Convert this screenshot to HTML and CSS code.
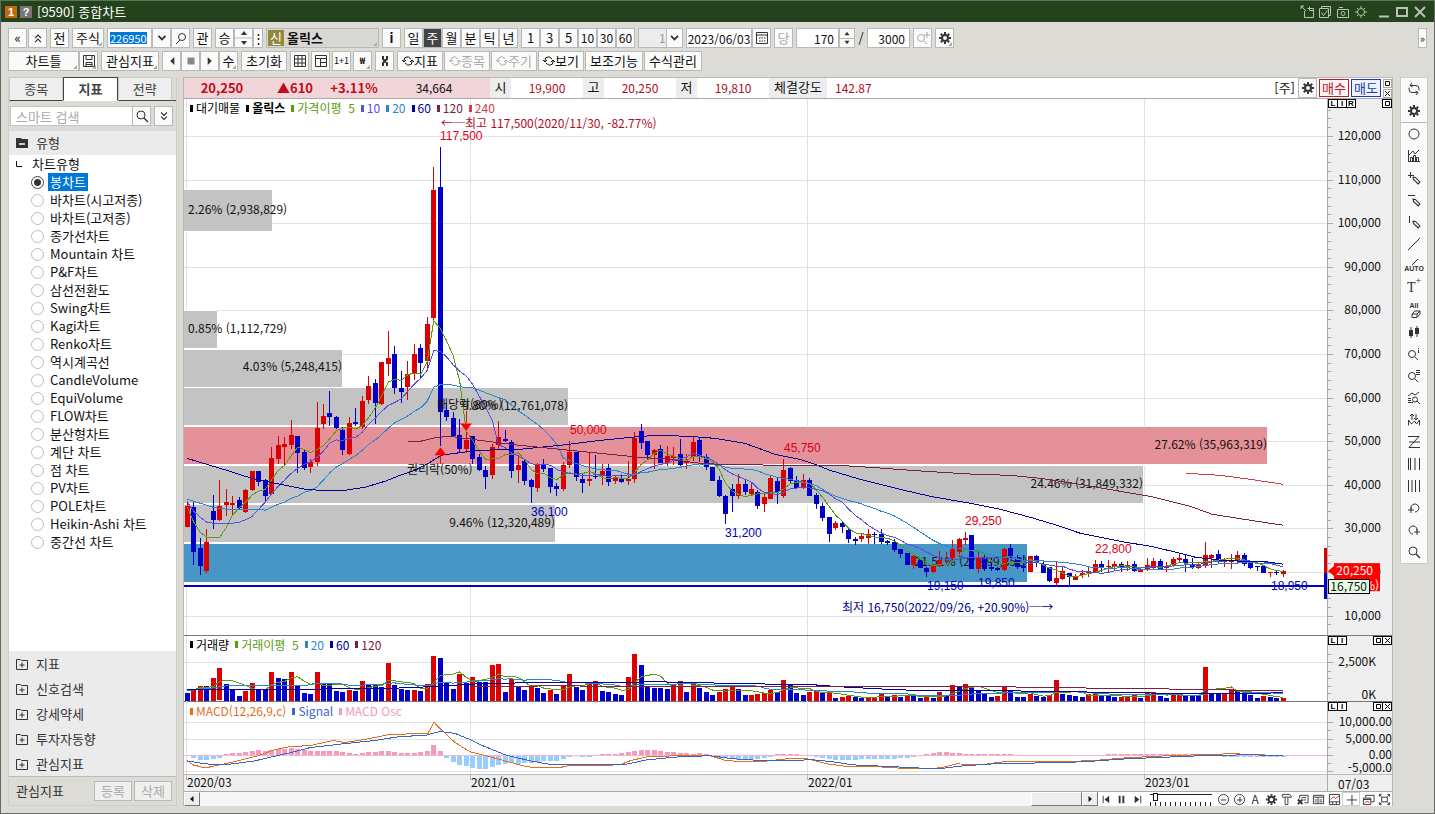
FILE: index.html
```html
<!DOCTYPE html>
<html lang="ko">
<head>
<meta charset="utf-8">
<title>[9590] 종합차트</title>
<link rel="stylesheet" href="styles.css">
</head>
<body>
<svg class="defs" aria-hidden="true">
  <symbol id="gear" viewBox="0 0 14 14"><circle cx="7" cy="7" r="3" fill="none" stroke="currentColor" stroke-width="2"/><path d="M7 1v2M7 11v2M1 7h2M11 7h2M2.8 2.8l1.4 1.4M9.8 9.8l1.4 1.4M11.2 2.8L9.8 4.2M4.2 9.8l-1.4 1.4" stroke="currentColor" stroke-width="2"/></symbol>
  <symbol id="lens" viewBox="0 0 14 14"><circle cx="6" cy="6" r="4" fill="none" stroke="currentColor"/><path d="M9 9l4 4" stroke="currentColor" stroke-width="1.4"/></symbol>
  <symbol id="chev" viewBox="0 0 10 10"><path d="M2.500 3.500L5 6l2.500-2.500" fill="none" stroke="currentColor" stroke-width="1.3"/></symbol>
  <symbol id="cycle" viewBox="0 0 12 12"><path d="M2 6.500V5a3 3 0 0 1 3-3h1.500L9 4M10 5.500V7a3 3 0 0 1-3 3H5.500L3 8M0 5l2 2 2-2M8 7l2-2 2 2" fill="none" stroke="currentColor"/></symbol>
  <symbol id="plusbox" viewBox="0 0 12 12"><path d="M.5 1.500h4l1 1h6v9H.5zM6 4.500v5M3.500 7h5" fill="none" stroke="currentColor"/></symbol>
  <symbol id="pen" viewBox="0 0 8 8"><path d="M1 1l2 .3 4 4L5.500 7 1.300 3z" fill="none" stroke="currentColor"/></symbol>
  <symbol id="sq" viewBox="0 0 7 7"><path d="M1.500 1.500h4v4h-4z" fill="none" stroke="currentColor"/></symbol>
  <symbol id="ex" viewBox="0 0 7 7"><path d="M1 1l5 5M6 1L1 6" fill="none" stroke="currentColor"/></symbol>
</svg>
<div class="window">
  <header class="titlebar">
    <span class="badge badge-num">1</span><span class="badge badge-help">?</span>
    <h1>[9590] 종합차트</h1>
    <div class="win-tools">
      <button aria-label="분리"><svg viewBox="0 0 14 14"><path d="M4.500 6v6.500h9v-9h-6M9.500 1.500v4h4M1 1l5 5M1 4V1h3" class="s"/></svg></button>
      <button aria-label="복사"><svg viewBox="0 0 14 14"><path d="M3.500 3V1.500h9v9H11M1.500 3.500h9v9h-9zM3.500 7.500l2 3 4-5" class="s"/></svg></button>
      <button aria-label="캡처"><svg viewBox="0 0 14 14"><path d="M1.500 4.500h11v8h-11zM3 2.500h4" class="s"/><circle cx="7" cy="8.500" r="2" class="s"/></svg></button>
      <button aria-label="설정"><svg viewBox="0 0 14 14"><circle cx="7" cy="7" r="3.500" class="s"/><path d="M7 1v2M7 11v2M1 7h2M11 7h2M3 3l1 1M10 10l1 1M11 3l-1 1M4 10l-1 1" class="s"/></svg></button>
    </div>
    <div class="win-ctl">
      <button aria-label="최소화"><svg viewBox="0 0 12 12"><path d="M1 10.500h10" class="s s2"/></svg></button>
      <button aria-label="최대화"><svg viewBox="0 0 12 12"><path d="M1 2h10v8H1z" class="s s2"/></svg></button>
      <button aria-label="닫기"><svg viewBox="0 0 12 12"><path d="M1 1l10 10M11 1L1 11" class="s s2"/></svg></button>
    </div>
  </header>

  <div class="toolbar">
    <div class="group tight"><button class="b w19">«</button><button class="b w19" aria-label="위로"><svg viewBox="0 0 12 12"><path d="M3.500 6L6 3.500 8.500 6M3.500 9.500L6 7l2.500 2.500" class="s"/></svg></button></div>
    <button class="b w19">전</button>
    <button class="b w32 corner">주식</button>
    <div class="group joined"><input class="code" aria-label="종목코드" value="226950"><button class="b w19" aria-label="목록"><svg><use href="#chev"/></svg></button><button class="b w19" aria-label="찾기"><svg viewBox="0 0 14 14"><circle cx="8" cy="6" r="3.500" class="s"/><path d="M6 9l-4 4" class="s"/></svg></button></div>
    <button class="b w19">관</button>
    <div class="group joined"><button class="b w19">승</button><button class="b w19" aria-label="이동"><svg viewBox="0 0 18 18" class="updown"><path d="M9 2l3 4H6zM9 16l3-4H6z"/><path d="M0 9h18" stroke="#bbb"/></svg></button><button class="b w10">⋮</button></div>
    <div class="stock corner"><span class="new">신</span><b>올릭스</b></div>
    <button class="b w19"><b>i</b></button>
    <div class="group joined"><button class="b w19">일</button><button class="b w19 on">주</button><button class="b w19">월</button><button class="b w19">분</button><button class="b w19">틱</button><button class="b w19">년</button></div>
    <div class="group joined"><button class="b w19">1</button><button class="b w19">3</button><button class="b w19">5</button><button class="b w19 small">10</button><button class="b w19 small">30</button><button class="b w19 small">60</button></div>
    <div class="pick"><select aria-label="단위" disabled><option>1</option></select><svg><use href="#chev"/></svg></div>
    <div class="group joined"><input class="date" aria-label="일자" value="2023/06/03"><button class="b w19" aria-label="달력"><svg viewBox="0 0 14 14"><path d="M1.500 1.500h11v11h-11zM1.500 4h11" class="s"/><path d="M4 7h7M4 10h7" class="s" stroke-dasharray="1.500 1"/></svg></button></div>
    <button class="b w19" disabled>당</button>
    <div class="group joined"><input class="num" aria-label="표시 개수" value="170"><span class="spin"><button aria-label="증가"><svg viewBox="0 0 8 6"><path d="M1 5l3-4 3 4z"/></svg></button><button aria-label="감소"><svg viewBox="0 0 8 6"><path d="M1 1l3 4 3-4z"/></svg></button></span></div>
    <span class="slash">/</span>
    <input class="num" aria-label="전체 개수" value="3000">
    <button class="b w19" aria-label="확대" disabled><svg viewBox="0 0 14 14"><circle cx="5" cy="7" r="3.500" class="s"/><path d="M8 10l3 3M11 1v6M8 4h6" class="s"/></svg></button>
    <button class="b w19 corner" aria-label="설정"><svg><use href="#gear"/></svg></button>
    <button class="b more" aria-label="더보기">»</button>
  </div>
  <div class="toolbar second">
    <div class="group joined"><button class="b w71 corner">차트틀</button><button class="b w19 corner" aria-label="저장"><svg viewBox="0 0 14 14"><path d="M1.500 1.500h11v11h-11zM4 1.500v4h6v-4M4 12V8.500h6V12M4 10.500h6" class="s"/></svg></button></div>
    <button class="b w58 corner">관심지표</button>
    <div class="group joined"><button class="b w19" aria-label="이전"><svg viewBox="0 0 12 12"><path d="M8 2.500v7L4.500 6z"/></svg></button><button class="b w19" aria-label="정지"><svg viewBox="0 0 12 12"><path d="M3 3h6v6H3z" fill="#888"/></svg></button><button class="b w19" aria-label="다음"><svg viewBox="0 0 12 12"><path d="M4 2.500v7L7.500 6z"/></svg></button><button class="b w19 corner">수</button></div>
    <button class="b w46">초기화</button>
    <div class="group icons">
      <button class="b w19" aria-label="표"><svg viewBox="0 0 14 14"><path d="M1.500 1.500h11v11h-11zM1.500 5h11M1.500 9h11M5 1.500v11M9 1.500v11" class="s"/></svg></button>
      <button class="b w19" aria-label="분할"><svg viewBox="0 0 14 14"><path d="M1.500 1.500h11v11h-11zM1.500 4.500h11M6.500 4.500v8M6.500 8.500h6" class="s"/></svg></button>
      <button class="b w19 tiny">1+1</button>
      <button class="b w19 corner tiny"><b>₩</b></button>
    </div>
    <button class="b w19" aria-label="도구"><svg viewBox="0 0 14 14"><path d="M5 2v3l4 4v3M9 2v3L5 9v3" class="s s2"/></svg></button>
    <div class="group tight">
      <button class="b w46 cyc"><svg><use href="#cycle"/></svg>지표</button>
      <button class="b w46 cyc" disabled><svg><use href="#cycle"/></svg>종목</button>
      <button class="b w46 cyc" disabled><svg><use href="#cycle"/></svg>주기</button>
      <button class="b w46 cyc"><svg><use href="#cycle"/></svg>보기</button>
      <button class="b w58">보조기능</button>
      <button class="b w58">수식관리</button>
    </div>
  </div>

  <main class="main">
    <aside class="side">
      <nav class="tabs"><button>종목</button><button class="sel">지표</button><button>전략</button></nav>
      <div class="search"><input aria-label="검색" placeholder="스마트 검색"><button class="b w19" aria-label="검색"><svg><use href="#lens"/></svg></button><button class="b w19 gap" aria-label="펼치기"><svg viewBox="0 0 12 12"><path d="M3.500 3L6 5.500 8.500 3M3.500 6.500L6 9l2.500-2.500" class="s"/></svg></button></div>
      <h2 class="sec"><svg viewBox="0 0 12 12"><path d="M0 1h5l1 1h6v9H0z" fill="#333"/><path d="M3 7h6" stroke="#fff" stroke-width="1.500"/></svg>유형</h2>
      <div class="tree">
        <div class="branch"><svg viewBox="0 0 6 6"><path d="M.5 0v5.500H6" class="s"/></svg>차트유형</div>
        <label><input type="radio" name="t" checked><span>봉차트</span></label>
        <label><input type="radio" name="t"><span>바차트(시고저종)</span></label>
        <label><input type="radio" name="t"><span>바차트(고저종)</span></label>
        <label><input type="radio" name="t"><span>종가선차트</span></label>
        <label><input type="radio" name="t"><span>Mountain 차트</span></label>
        <label><input type="radio" name="t"><span>P&amp;F차트</span></label>
        <label><input type="radio" name="t"><span>삼선전환도</span></label>
        <label><input type="radio" name="t"><span>Swing차트</span></label>
        <label><input type="radio" name="t"><span>Kagi차트</span></label>
        <label><input type="radio" name="t"><span>Renko차트</span></label>
        <label><input type="radio" name="t"><span>역시계곡선</span></label>
        <label><input type="radio" name="t"><span>CandleVolume</span></label>
        <label><input type="radio" name="t"><span>EquiVolume</span></label>
        <label><input type="radio" name="t"><span>FLOW차트</span></label>
        <label><input type="radio" name="t"><span>분산형차트</span></label>
        <label><input type="radio" name="t"><span>계단 차트</span></label>
        <label><input type="radio" name="t"><span>점 차트</span></label>
        <label><input type="radio" name="t"><span>PV차트</span></label>
        <label><input type="radio" name="t"><span>POLE차트</span></label>
        <label><input type="radio" name="t"><span>Heikin-Ashi 차트</span></label>
        <label><input type="radio" name="t"><span>중간선 차트</span></label>
      </div>
      <div class="folds">
        <button><svg><use href="#plusbox"/></svg>지표</button>
        <button><svg><use href="#plusbox"/></svg>신호검색</button>
        <button><svg><use href="#plusbox"/></svg>강세약세</button>
        <button><svg><use href="#plusbox"/></svg>투자자동향</button>
        <button><svg><use href="#plusbox"/></svg>관심지표</button>
      </div>
      <div class="foot"><span>관심지표</span><button class="b w38" disabled>등록</button><button class="b w38" disabled>삭제</button></div>
    </aside>

    <section class="chart">
      <div class="quote">
        <div class="pink"><b class="q76">20,250</b><b class="q70">▲610</b><b class="q48">+3.11%</b><span class="q112">34,664</span></div>
        <span class="k">시</span><span class="v">19,900</span>
        <span class="k">고</span><span class="v">20,250</span>
        <span class="k">저</span><span class="v">19,810</span>
        <span class="k wide">체결강도</span><span class="v left">142.87</span>
        <span class="period">[주]</span>
        <button class="b w19" aria-label="설정"><svg><use href="#gear"/></svg></button>
        <button class="trade buy">매수</button><button class="trade sell">매도</button>
        <span class="mini"><button aria-label="창"><svg><use href="#sq"/></svg></button><button aria-label="닫기"><svg><use href="#ex"/></svg></button></span>
      </div>
      <div class="pane price">
        <div class="plot"><svg id="price"></svg>
          <ul class="legend"><li class="c-k">대기매물</li><li class="c-k"><b>올릭스</b></li><li class="c-5">가격이평&nbsp; 5</li><li class="c-10">10</li><li class="c-20">20</li><li class="c-60">60</li><li class="c-120">120</li><li class="c-240">240</li></ul>
        </div>
        <div class="axis"><svg id="priceAxis"></svg>
          <div class="tags"><button>L</button><button>I</button><button>R</button><button class="end" aria-label="창"><svg><use href="#sq"/></svg></button></div>
        </div>
      </div>
      <div class="pane volume">
        <div class="plot"><svg id="volume"></svg>
          <ul class="legend"><li class="c-k">거래량</li><li class="c-5">거래이평&nbsp; 5</li><li class="c-20">20</li><li class="c-60">60</li><li class="c-120">120</li></ul>
        </div>
        <div class="axis"><svg id="volumeAxis"></svg>
          <div class="tags"><button>L</button><button>I</button><button class="end" aria-label="창"><svg><use href="#sq"/></svg></button><button aria-label="닫기"><svg><use href="#ex"/></svg></button></div>
        </div>
      </div>
      <div class="pane macd">
        <div class="plot"><svg id="macd"></svg>
          <ul class="legend"><li class="c-m">MACD(12,26,9,c)</li><li class="c-s">Signal</li><li class="c-o">MACD Osc</li></ul>
        </div>
        <div class="axis"><svg id="macdAxis"></svg>
          <div class="tags"><button>L</button><button>I</button><button class="end" aria-label="창"><svg><use href="#sq"/></svg></button><button aria-label="닫기"><svg><use href="#ex"/></svg></button></div>
        </div>
      </div>
      <div class="pane dates"><div class="plot"><svg id="dates"></svg></div><div class="axis"><span>07/03</span></div></div>
      <div class="bottom">
        <button class="sb" aria-label="왼쪽"><svg viewBox="0 0 8 8"><path d="M5.500 1v6L2 4z"/></svg></button>
        <div class="track"><div class="thumb"></div></div>
        <button class="sb" aria-label="오른쪽"><svg viewBox="0 0 8 8"><path d="M2.500 1v6L6 4z"/></svg></button>
        <div class="ctl">
          <button aria-label="처음"><svg viewBox="0 0 14 14"><path d="M4.500 3v8" class="s"/><path d="M11 3v8L6 7z"/></svg></button>
          <button aria-label="일시정지"><svg viewBox="0 0 14 14"><path d="M5 3v8M9 3v8" class="s s2"/></svg></button>
          <button aria-label="끝"><svg viewBox="0 0 14 14"><path d="M10.500 3v8" class="s"/><path d="M4 3v8l5-4z"/></svg></button>
          <input type="range" aria-label="배율" min="0" max="100" value="6">
          <button aria-label="축소"><svg viewBox="0 0 14 14"><circle cx="7" cy="7" r="5.500" class="s"/><path d="M4 7.500h6" class="s"/></svg></button>
          <button aria-label="확대"><svg viewBox="0 0 14 14"><circle cx="7" cy="7" r="5.500" class="s"/><path d="M4 7.500h6M7.500 4v6" class="s"/></svg></button>
          <button>A</button>
          <button aria-label="설정"><svg><use href="#gear"/></svg></button>
          <button aria-label="도구"><svg viewBox="0 0 14 14"><path d="M2.500 4V1.500h8l2 3M2.500 4.500h10M5.500 5v7.500h3V5" class="s"/></svg></button>
          <button aria-label="삭제"><svg viewBox="0 0 14 14"><path d="M4 6V2.500h9v8H9M6 5h5M8 7.500h3" class="s"/><path d="M2 7l5 5M7 7l-5 5" class="s s2"/></svg></button>
          <button aria-label="표"><svg viewBox="0 0 14 14"><path d="M1.500 2.500h11v9h-11zM2 4.500h10M6.500 5v6M3 7.500h2M3 9.500h2M8 7.500h3M8 9.500h3" class="s"/></svg></button>
          <button aria-label="차트"><svg viewBox="0 0 14 14"><path d="M1.500 1.500h11v11h-11zM1.500 9.500h11M5 9.500v3M9 9.500v3" class="s"/><path d="M3 7l3-3 2 2 4-3" fill="none" stroke="#c22"/></svg></button>
          <button class="pressed" aria-label="십자선"><svg viewBox="0 0 14 14"><path d="M7.500 2v11M2 7.500h11" class="s"/></svg></button>
          <button aria-label="창 복제"><svg viewBox="0 0 14 14"><path d="M4 5V2.500h9v7h-3M1.500 5.500h8v7h-8zM1.500 7h8" class="s"/><path d="M3 11l2-2 3 1" fill="none" stroke="#c22"/></svg></button>
          <button aria-label="전체화면"><svg viewBox="0 0 14 14"><path d="M4 4.500h6v5H4zM1.500 4V1.500H4M10 1.500h2.500V4M12.500 10v2.500H10M4 12.500H1.500V10M2 2l2 2M12 2l-2 2M2 12l2-2M12 12l-2-2" class="s"/></svg></button>
        </div>
      </div>
    </section>

    <nav class="rail">
      <button aria-label="새로고침"><svg viewBox="0 0 14 14"><path d="M5 1L3 3.500 5.500 5M3 3.500h6a3 3 0 0 1 3 3v2M9 13l2-2.500L8.500 9M11 10.500H5a3 3 0 0 1-3-3v-2" class="s"/></svg></button>
      <button class="div" aria-label="설정"><svg><use href="#gear"/></svg></button>
      <button aria-label="원"><svg viewBox="0 0 14 14"><circle cx="7" cy="7" r="5" class="s"/></svg></button>
      <button aria-label="지표"><svg viewBox="0 0 14 14"><path d="M1.500 1v11.500H13M3.500 12V8.500h2V12M6.500 12V6.500h2V12M9.500 12V8.500h2V12M2 6l4-4 2 3 4-4" class="s"/></svg></button>
      <button aria-label="십자 그리기"><svg viewBox="0 0 14 14"><path d="M1 4.500h6M3.500 1v6" class="s"/><use href="#pen" x="5" y="5" width="9" height="9"/></svg></button>
      <button aria-label="수평선"><svg viewBox="0 0 14 14"><path d="M1 2.500h7" class="s"/><use href="#pen" x="5" y="5" width="9" height="9"/></svg></button>
      <button aria-label="수직선"><svg viewBox="0 0 14 14"><path d="M2.500 1v7" class="s"/><use href="#pen" x="5" y="5" width="9" height="9"/></svg></button>
      <button aria-label="추세선"><svg viewBox="0 0 14 14"><path d="M1 13L13 1" class="s"/></svg></button>
      <button class="auto"><svg viewBox="0 0 14 6"><path d="M5 6l6-6" class="s"/></svg>AUTO</button>
      <button class="txt">T<sup>+</sup></button>
      <button class="all">All<svg viewBox="0 0 14 8"><path d="M5 7.500V4l3-3h5v3l-3 3.500zM5 4h5v3M10 4l3-3" class="s"/></svg></button>
      <button aria-label="봉"><svg viewBox="0 0 14 14"><path d="M4 2v11M10 1v11" class="s"/><path d="M2 5h4v6H2zM8 3h4v6H8z"/></svg></button>
      <button aria-label="정보"><svg viewBox="0 0 14 14"><circle cx="5" cy="7" r="3.500" class="s"/><path d="M8 10l3 3M11.500 1v1M11.500 3v3" class="s"/></svg></button>
      <button aria-label="목록 검색"><svg viewBox="0 0 14 14"><circle cx="5" cy="7" r="3.500" class="s"/><path d="M8 10l3 3M9 1.500h4M9 3.500h4M9 5.500h4" class="s"/></svg></button>
      <button aria-label="차트 검색"><svg viewBox="0 0 14 14"><circle cx="8" cy="8.500" r="2.500" class="s"/><path d="M10 10l3 3M1 5l4-3 3 2 4-3M1 7.500h3M1 9.500h3M1 11.500h5" class="s"/></svg></button>
      <button aria-label="신호"><svg viewBox="0 0 14 14"><path d="M1.500 12.500V7l3 4 3-3 2 3 3-4v5.500M5 7V1M3 3l2-2 2 2M9 1v6M7 5l2 2 2-2" class="s"/></svg></button>
      <button aria-label="지그재그"><svg viewBox="0 0 14 14"><path d="M1 1.500h11L2 12.500h11M2 7h11" class="s"/></svg></button>
      <button aria-label="구간"><svg viewBox="0 0 14 14"><path d="M1.500 1v12M3.500 1v12M8 1v12M12.500 1v12" class="s"/></svg></button>
      <button aria-label="등간격"><svg viewBox="0 0 14 14"><path d="M1.500 1v12M5 1v12M8.500 1v12M12.500 1v12" class="s"/></svg></button>
      <button aria-label="실행취소"><svg viewBox="0 0 14 14"><path d="M4 8a4 4 0 1 1 4 3M1 9h6M4 6v6" class="s"/></svg></button>
      <button aria-label="다시실행"><svg viewBox="0 0 14 14"><path d="M6 11a4 4 0 1 1 4-3M7 9h6M10 6v6" class="s"/></svg></button>
      <button aria-label="찾기"><svg><use href="#lens"/></svg></button>
    </nav>
  </main>
</div>
<script src="chart.js"></script>
</body>
</html>
```

FILE: styles.css
```css
* { box-sizing: border-box; }
body { margin: 0; font: 13px/18px "Noto Sans CJK KR", "Liberation Sans", sans-serif; color: #111; background: #dcdbd6; }
button, input, select { font: inherit; color: inherit; margin: 0; padding: 0; border: 0; border-radius: 0; background: none; }
button { display: flex; align-items: center; justify-content: center; white-space: nowrap; }
svg { display: block; width: 14px; height: 14px; flex: none; fill: currentColor; }
.defs { position: absolute; width: 0; height: 0; }
.s { fill: none; stroke: currentColor; stroke-width: 1; }
.s2 { stroke-width: 2; }
.window { height: 100vh; min-height: 640px; display: flex; flex-direction: column; border: 1px solid #666963; border-top-color: #5c7554; }

.titlebar { display: flex; align-items: center; flex: none; height: 21px; padding: 0 8px 0 4px; background: #24431c; color: #fff; }
.titlebar h1 { margin: 0 0 0 5px; font-size: 13px; font-weight: 400; line-height: 19px; flex: 1; }
.badge { width: 12px; height: 12px; margin-right: 3px; font: bold 11px/12px "Liberation Sans", sans-serif; text-align: center; }
.badge-num { background: #c06a08; }
.badge-help { background: #77757a; margin-right: 0; }
.win-tools, .win-ctl { display: flex; color: #b9c2b4; }
.win-tools { gap: 4px; margin-right: 10px; }
.win-ctl { gap: 6px; }
.win-ctl svg { width: 12px; height: 12px; }

.toolbar { display: flex; align-items: center; flex: none; gap: 3px; height: 20px; margin: 6px 7px 0; }
.toolbar.second { margin-top: 3px; }
.group { display: flex; gap: 1px; }
.group.icons { gap: 2px; }
.group.joined { gap: 0; }
.joined > * + * { border-left-width: 0; }
.b { position: relative; flex: none; height: 20px; background: #fafafa; border: 1px solid #b9b9b7; line-height: 16px; }
.b:disabled { color: #aaa; }
.b svg { width: 14px; height: 14px; color: #333; }
.b:disabled svg { color: #aaa; }
.w10 { width: 10px; } .w19 { width: 19px; } .w32 { width: 32px; } .w38 { width: 38px; } .w46 { width: 46px; } .w58 { width: 58px; } .w71 { width: 71px; }
.b.on { background: #444; color: #fff; }
.b.small { font-size: 12px; }
.b.tiny { font-size: 9px; }
.b .updown { width: 18px; height: 18px; }
.b.cyc svg { width: 12px; height: 12px; color: inherit; }
.corner::after { content: ""; position: absolute; right: 1px; bottom: 1px; border: 2px solid transparent; border-right-color: #aaa; border-bottom-color: #aaa; }
.toolbar input { height: 20px; background: #fff; border: 1px solid #b9b9b7; font-size: 12px; }
.toolbar .code { width: 45px; padding-left: 2px; color: #fff; font-size: 11px; background: linear-gradient(#0078d7, #0078d7) 2px 3px / 37px 12px no-repeat #fff; }
.date { width: 66px; text-align: center; }
.num { width: 43px; padding-right: 4px; text-align: right; }
.stock { position: relative; display: flex; align-items: center; gap: 3px; width: 113px; height: 20px; padding-left: 1px; border: 1px solid #b9b9b7; background: #d9d8d4; line-height: 16px; }
.new { width: 16px; height: 16px; background: #94893a; color: #fff; text-align: center; line-height: 15px; }
.pick { display: flex; align-items: center; width: 45px; height: 20px; border: 1px solid #b9b9b7; background: #fafafa; }
.pick select { appearance: none; width: 28px; height: 18px; padding-left: 20px; border-right: 1px solid #b9b9b7; background: #ececec; color: #999; font-size: 12px; opacity: 1; }
.pick svg { width: 15px; color: #333; }
.spin { display: flex; flex-direction: column; width: 16px; border: 1px solid #b9b9b7; background: #fafafa; }
.spin button { flex: 1; }
.spin button + button { border-top: 1px solid #b9b9b7; }
.spin svg { width: 8px; height: 5px; fill: #333; }
.slash { width: 6px; text-align: center; }
.b.more { width: 9px; margin-left: auto; font-size: 11px; }

.main { display: flex; flex: 1; min-height: 0; margin: 6px 6px 7px 7px; }
.side { display: flex; flex-direction: column; flex: none; width: 169px; margin-right: 6px; background: #fff; border: 1px solid #cfcfcc; border-top: 0; }
.tabs { display: flex; flex: none; height: 24px; padding-right: 4px; background: #dcdbd6; border-bottom: 1px solid #444; }
.tabs button { flex: 1; height: 24px; border: 1px solid #c8c8c5; border-bottom: 1px solid #444; background: #eee; color: #444; }
.tabs .sel { background: #fff; border-color: #444; border-bottom-color: #fff; font-weight: 700; }
.search { display: flex; flex: none; height: 30px; padding: 5px 3px 5px 1px; background: #dcdbd6; }
.search input { flex: 1; min-width: 0; height: 20px; padding-left: 5px; background: #fff; border: 1px solid #c4c4c1; border-right: 0; }
.search input::placeholder { color: #aaa; }
.search .gap { margin-left: 3px; }
.sec { display: flex; align-items: center; gap: 8px; flex: none; height: 24px; margin: 0; padding-left: 7px; background: #ebebeb; font-size: 13px; font-weight: 400; line-height: 20px; color: #333; }
.sec svg, .folds svg { width: 12px; height: 12px; }
.tree { flex: 1; min-height: 0; overflow: hidden; }
.branch { display: flex; align-items: center; gap: 10px; height: 18px; padding-left: 7px; }
.branch svg { width: 6px; height: 6px; }
.tree label { display: flex; align-items: center; height: 18px; padding-left: 22px; }
.tree label span { height: 18px; padding: 0 2px; line-height: 17px; white-space: nowrap; }
.tree input { appearance: none; flex: none; width: 13px; height: 13px; margin-right: 4px; border: 1px solid #bbb; border-radius: 50%; background: #fff; }
.tree input:checked { border-color: #444; background: radial-gradient(circle, #333 3px, #fff 4px); }
.tree input:checked + span { background: #0078d7; color: #fff; }
.folds { flex: none; background: #ebebeb; }
.folds button { gap: 8px; height: 25px; width: 100%; padding-left: 7px; justify-content: flex-start; color: #333; }
.foot { display: flex; align-items: center; flex: none; gap: 2px; height: 29px; padding: 0 4px 0 7px; background: #dcdbd6; border-top: 1px solid #bbb; color: #333; }
.foot span { flex: 1; }
.foot .b { background: #efefed; }

.chart { display: flex; flex-direction: column; flex: 1; min-width: 0; border: 1px solid #b9b9b7; border-bottom: 0; background: #fff; }
.quote { display: flex; align-items: center; flex: none; height: 21px; border-bottom: 1px solid #aaa; }
.quote > .b { margin-right: 2px; }
.pink { display: flex; width: 306px; height: 20px; background: #f2d5d9; text-align: center; line-height: 19px; }
.pink b { color: #c00d18; }
.q76 { width: 76px; } .q70 { width: 70px; } .q48 { width: 48px; } .q112 { width: 112px; font-size: 12px; }
.k { width: 21px; height: 20px; background: #ededed; text-align: center; line-height: 18px; }
.k.wide { width: 58px; }
.v { width: 72px; font-size: 12px; line-height: 18px; text-align: center; color: #b00d1e; }
.v.left { text-align: left; padding-left: 8px; }
.period { margin-left: auto; padding-right: 3px; }
.trade { width: 30px; height: 18px; margin-right: 2px; border: 1px solid; line-height: 14px; }
.buy { color: #b71c2c; background: #fff3f3; }
.sell { color: #1c3bb0; background: #eef3ff; }
.mini { display: flex; flex-direction: column; gap: 1px; width: 9px; }
.mini button { width: 9px; height: 9px; border: 1px solid #aaa; }
.mini svg { width: 7px; height: 7px; }

.pane { display: flex; min-height: 0; border-bottom: 1px solid #777; }
.price { flex: 538 1 0; } .volume { flex: 66 1 0; } .macd { flex: 72 1 0; border-color: #bbb; } .dates { flex: none; height: 17px; border-color: #aaa; background: #eee; }
.plot { position: relative; flex: 1; min-width: 0; }
.axis { position: relative; flex: none; width: 65px; background: #efefef; border-left: 1px solid #aaa; font-size: 12px; }
.dates .axis { padding-left: 10px; line-height: 17px; }
.plot > svg, .axis > svg { position: absolute; left: 0; top: 0; width: 100%; height: 100%; overflow: visible; }
.axis > svg { font-size: 12px; }
.legend { position: absolute; left: 6px; top: 0; display: flex; gap: 6px; margin: 0; padding: 0; list-style: none; }
.legend li { display: flex; align-items: center; font-size: 12px; }
.legend li::before { content: ""; width: 3px; height: 7px; margin-right: 3px; background: currentColor; }
.c-k { color: #000; } .c-5 { color: #5a9c10; } .c-10 { color: #5a4ee0; } .c-20 { color: #2a87cc; } .c-60 { color: #00009c; } .c-120 { color: #7b2042; } .c-240 { color: #d83c46; } .c-m { color: #e0701c; } .c-s { color: #3c64c8; } .c-o { color: #f49ac1; }
.tags { position: absolute; left: 0; right: 0; top: 0; display: flex; }
.tags button { width: 10px; height: 9px; margin-right: -1px; border: 1px solid #000; background: #fff; font: bold 8px/7px "Liberation Sans", sans-serif; color: #000; }
.tags svg { width: 7px; height: 7px; }
.tags .end { margin-left: auto; }
.tags button:last-child { margin-right: 0; }

.bottom { display: flex; flex: none; height: 14px; }
.sb { width: 16px; background: #eee; border: 1px solid #fff; border-right-color: #777; border-bottom-color: #777; }
.sb svg { width: 8px; height: 8px; }
.track { display: flex; justify-content: flex-end; flex: 1; background: #f6f6f6; }
.thumb { width: 51px; background: #eee; border: 1px solid #fff; border-right-color: #777; border-bottom-color: #777; }
.ctl { display: flex; align-items: center; width: 294px; color: #333; }
.ctl button { flex: 1; height: 14px; font-size: 12px; line-height: 14px; }
.ctl svg { width: 13px; height: 13px; }
.ctl .pressed { background: #fff; border: 1px solid #ccc; }
.ctl input { appearance: none; width: 62px; height: 13px; margin: 0 4px; background: linear-gradient(#222, #222) 0 1px / 100% 1px no-repeat, repeating-linear-gradient(90deg, #222 0 1px, transparent 1px 5px) 0 100% / 100% 4px no-repeat; }
.ctl input::-webkit-slider-thumb { appearance: none; width: 5px; height: 8px; margin-top: -5px; border: 1px solid #111; background: #fff; }

.rail { display: flex; flex-direction: column; align-self: flex-start; flex: none; width: 28px; margin-left: 7px; background: #fafafa; border: 1px solid #ccc; color: #333; }
.rail button { height: 22px; width: 100%; }
.rail .div { height: 23px; border-bottom: 1px solid #bbb; }
.rail svg { width: 14px; height: 14px; }
.rail .auto, .rail .all { flex-direction: column; font: bold 7px/8px "Liberation Sans", sans-serif; }
.rail .auto svg { height: 6px; } .rail .all svg { height: 8px; }
.rail .txt { font: 14px/14px "Liberation Serif", serif; }
.rail sup { font-size: 10px; line-height: 8px; align-self: flex-start; }
.lbl { font-family: "Liberation Sans", sans-serif; font-size: 12px; }
.note { font-size: 12px; }
```

FILE: chart.js
```js
const W = 1143, STEP = 6.485, X0 = 3.3;
const RED = '#dc0000', BLUE = '#0000c8', GRID = '#e2e2e2';
const C = { m5: '#5a9c10', m10: '#5a4ee0', m20: '#2a87cc', m60: '#00009c', m120: '#7b2042', m240: '#d83c46' };

// direction, body top, body bottom, high, low (chart levels)
const candles = `R507,528,502,528|B508,553,503,566|B549,567,539,576|R543,572,530,574|B512,521,496,530|R507,521,481,522|R503,506,490,517|R504,506,497,517|B501,509,498,510|R491,513,490,514
R472,491,472,492|B472,483,472,487|B481,497,480,502|R459,495,448,496|R446,460,437,465|R445,448,438,467|R436,446,421,450|B437,454,437,474|B453,469,450,471|R463,468,460,474
R429,463,403,467|R417,425,405,430|B414,418,392,427|B418,429,417,430|B431,451,428,456|R424,455,418,456|B423,425,409,427|R402,428,397,430|R387,401,377,405|B384,404,380,425
R362,404,362,405|R358,364,331,376|B354,388,346,394|B389,393,372,404|R375,388,361,400|R354,373,344,380|B348,363,344,379|R324,361,317,370|R190,318,167,323|B187,412,147,447
B411,418,404,422|B419,437,413,438|B436,450,420,453|R441,450,430,454|B437,460,437,465|B458,471,455,472|B471,478,467,490|R448,476,445,480|R438,446,422,450|B440,442,431,443
B443,472,441,479|R466,471,456,484|B462,482,460,486|B481,488,480,504|R465,489,464,493|B465,470,460,473|B469,488,469,494|B487,490,484,497|R466,490,463,492|R453,466,442,469
B453,478,453,482|B480,484,475,494|R480,482,453,487|B477,478,456,480|R472,477,465,486|B469,483,465,487|R479,482,476,485|B479,483,475,484|R480,482,462,486|R439,480,433,484
B432,444,425,450|B442,456,442,460|R451,456,450,470|B450,464,446,464|R457,464,447,467|R457,459,448,466|B455,466,440,467|R462,464,455,470|R443,458,437,462|B441,458,439,463
B458,468,455,471|B468,482,468,482|B481,497,477,498|B497,515,496,525|B490,497,485,513|R485,497,475,500|B485,493,480,496|R490,495,484,496|B493,507,491,510|R498,505,495,513
R479,500,476,500|B482,493,479,505|R471,497,460,499|B469,482,468,484|B481,489,477,490|R481,489,475,490|B481,497,479,497|B496,505,494,510|B507,519,504,522|B518,535,518,543
R524,529,522,531|B524,528,522,534|B531,540,529,544|B540,542,538,546|R537,540,534,543|R535,539,530,545|B535,536,533,545|B535,543,530,545|B542,544,541,546|B543,551,540,553
B550,555,550,559|B554,566,554,566|R557,566,556,570|B561,569,560,569|B569,573,568,578|R567,573,565,574|R561,567,552,568|R560,561,553,565|R550,559,541,564|R540,553,539,558
R539,541,533,546|B536,570,536,570|R559,570,553,574|B559,570,555,572|B568,570,559,572|B569,571,567,572|R550,571,549,572|B549,557,545,560|B559,568,556,570|B567,569,556,573
R557,573,557,573|B557,563,556,568|B566,574,563,574|B568,582,568,583|R579,584,563,586|R572,580,568,581|B574,578,574,586|R577,581,575,581|R574,576,571,579|R572,574,568,578
R565,573,561,574|B565,568,562,573|R567,568,561,573|R565,568,562,571|B565,569,563,573|R566,569,562,572|B565,572,562,573|R571,573,570,573|R566,571,559,572|R562,569,559,570
B562,570,560,571|R567,569,563,573|R560,566,558,568|R559,561,554,563|B560,564,555,573|B566,568,559,570|R566,569,563,570|R556,566,543,569|R556,559,555,569|B555,560,551,565
R562,563,559,568|R561,563,555,570|R556,561,552,565|B556,565,554,567|B563,569,563,570|B567,568,567,572|B567,574,567,574|R573,574,573,578|B573,574,571,576|R572,575,571,578`
  .split(/[|\n]/).map(s => { const n = s.slice(1).split(',').map(Number); return { up: s[0] === 'R', top: n[0], bot: n[1], hi: n[2], lo: n[3] }; });

const volumes = `B8 R11 R15 B15 R23 R32 B17 B12 B5 R10 R18 B11 B11 R29 B23 B22 R29 B16 B8 B7 R29 B17 B17 B10 B9 R11 B10 R20 B16 B16 B14 R37 B16 B12 B11 R11 B10 R17 R44 B42 B18 B12 R27 B18 R24 B19 B19 R35 R36 B9 R22 B15 B11 R16 B13 B8 R11 B7 R16 R27 B14 B11 R17 R20 B10 B9 B7 B6 R24 R46 B35 B15 B13 B13 B12 R17 R20 B9 R17 B13 B9 B6 R9 R12 R14 B12 B6 R6 R7 R8 R11 B9 R21 B16 B8 B6 R9 R10 B8 R8 B3 R4 R5 B4 B3 R3 R4 R7 B4 R6 B4 R6 B5 B3 R4 B3 R9 B5 R16 B15 R17 B14 B10 B7 B4 R5 R14 B11 B4 B4 R7 B5 B4 R6 R21 B7 B6 B5 B4 R7 R7 B5 B5 B4 R4 R4 R6 B3 R9 R9 B5 B3 R6 R6 B5 B5 B6 R33 B8 B8 R8 R12 B10 B9 B6 B3 R5 B4 B3 R3`
  .split(' ').map(s => ({ up: s[0] === 'R', h: +s.slice(1) }));

const osc = [0,-2,-4,-4,-3,-2,1,2,2,3,4,5,4,5,6,6,7,6,5,4,4,4,4,4,3,2,1,2,3,3,4,4,3,2,2,2,3,4,10,4,-2,-6,-9,-10,-12,-13,-13,-11,-9,-8,-7,-8,-7,-7,-6,-5,-5,-5,-3,-1,0,-1,-1,0,1,1,1,2,3,4,5,5,5,4,3,3,2,2,1,2,1,0,-1,-2,-3,-4,-3,-3,-3,-2,-1,1,1,1,1,0,0,-1,-2,-3,-4,-4,-4,-4,-3,-3,-3,-3,-3,-3,-2,-2,-1,0,1,2,3,3,2,2,1,1,1,1,1,1,1,1,0,0];
while (osc.length < 170) osc.push(osc.length < 142 ? 0 : osc.length < 160 ? 1 : -1);

const line60 = [[187,459],[210,466],[230,472],[245,477],[260,481],[285,486],[305,490],[320,491],[345,491],[365,488],[385,482],[400,476],[415,471],[430,463],[441,456],[455,454],[470,452],[500,450],[520,450],[560,446],[600,441],[640,437],[660,436],[690,437],[715,439],[745,444],[775,455],[800,460],[815,465],[830,471],[860,480],[900,490],[930,497],[970,504],[1000,510],[1030,518],[1060,527],[1080,534],[1100,538],[1125,543],[1150,547],[1180,554],[1195,558],[1220,561],[1240,562],[1262,562],[1283,565]];
const line120 = [[408,442],[420,442],[437,438],[450,437],[480,441],[520,446],[560,450],[600,454],[640,458],[670,460],[700,464],[720,465],[782,466],[838,466],[870,468],[925,472],[975,475],[1010,476],[1040,479],[1080,485],[1120,492],[1150,497],[1190,507],[1212,515],[1250,521],[1283,526]];
const line240 = [[1186,474],[1220,476],[1250,480],[1283,485]];
const vol60 = [[187,690],[360,689],[410,688],[480,684],[530,683],[613,683],[653,682],[747,684],[813,685],[840,687],[897,690],[947,691],[1010,691],[1143,693],[1200,694],[1283,693]];
const vol120 = [[470,687],[560,686],[640,687],[1000,687],[1067,688],[1157,689],[1217,690],[1283,691]];
const macdLine = [[187,761],[193,765],[205,768],[220,765],[238,761],[258,756],[275,750],[290,747],[310,746],[333,741],[345,743],[370,739],[390,735],[428,734],[434,723],[442,731],[455,743],[470,752],[490,757],[512,763],[527,767],[558,768],[568,766],[620,765],[630,761],[647,757],[677,756],[710,756],[727,761],[760,762],[787,759],[807,759],[827,764],[850,767],[880,767],[913,769],[940,768],[957,764],[980,765],[1003,762],[1043,762],[1090,761],[1127,758],[1167,756],[1233,754],[1283,756]];
const signalLine = [[187,761],[205,764],[225,765],[255,761],[290,753],[310,748],[345,744],[375,741],[400,737],[425,736],[440,732],[455,734],[470,740],[480,745],[505,755],[530,761],[553,765],[623,765],[647,760],[680,757],[710,756],[733,759],[767,761],[813,760],[833,762],[853,765],[897,767],[937,769],[963,766],[993,764],[1043,763],[1083,762],[1127,759],[1200,756],[1250,755],[1283,756]];

const average = (values, n, seed) => values.map((v, i) =>
  i < n - 1 ? seed[Math.min(i, seed.length - 1)] : values.slice(i - n + 1, i + 1).reduce((a, b) => a + b, 0) / n);

function pane(id, top, height) {
  const el = document.getElementById(id);
  const sx = el.clientWidth / W, sy = el.clientHeight / height;
  const X = v => v * sx, Y = v => (v - top) * sy;
  let out = '';
  const p = {
    X, Y,
    add: s => { out += s; },
    rect: (x, y, w, h, fill) => { out += `<rect x="${Math.round(X(x))}" y="${Math.round(Y(y))}" width="${Math.max(1, Math.round(w * sx))}" height="${Math.max(1, Math.round(h * sy))}" fill="${fill}"/>`; },
    path: (pts, color) => { out += `<polyline points="${pts.map(q => X(q[0]) + ',' + Y(q[1])).join(' ')}" fill="none" stroke="${color}" shape-rendering="crispEdges"/>`; },
    curve: (pts, color) => p.path(pts.map(q => [q[0] - 184, q[1]]), color),
    series: (vals, color) => p.path(vals.map((v, i) => [X0 + STEP * i, v]), color),
    text: (x, y, s, color, cls = 'note', anchor = 'start') => { out += `<text x="${X(x)}" y="${Y(y)}" fill="${color}" class="${cls}" text-anchor="${anchor}">${s}</text>`; },
    years: () => [2, 286, 623, 960].forEach(x => p.rect(x, top, 1, height, GRID)),
    done: () => { el.innerHTML = out; }
  };
  return p;
}

function axis(id, top, height, labels, ticks) {
  const el = document.getElementById(id), sy = el.clientHeight / height;
  let out = '';
  ticks.forEach(([y, w]) => { out += `<rect x="0" y="${Math.round((y - top) * sy)}" width="${w}" height="1" fill="#aaa"/>`; });
  labels.forEach(([y, s, x]) => { out += `<text x="${x}" y="${(y - top) * sy}" text-anchor="end" fill="#111">${s}</text>`; });
  el.innerHTML = out;
  return { el, Y: y => (y - top) * sy };
}

function draw() {
  const p = pane('price', 99, 537);
  p.years();
  for (let i = 0; i < 12; i++) p.rect(0, 136 + i * 43.7, W, 1, GRID);
  [[190,41,88],[311,37,33],[350,37,158],[389,37,384],[428,37,1083],[467,37,959],[506,37,371],[545,38,843]].forEach(([y, h, w], i) => {
    p.rect(0, y - 1, w, h + 3, '#fff');
    p.rect(0, y, w, h, i === 4 ? '#e59199' : i === 7 ? '#4796c5' : '#c3c3c3');
  });
  p.text(4, 214, '2.26% (2,938,829)', '#111'); p.text(4, 333, '0.85% (1,112,729)', '#111');
  [[372,158,'4.03% (5,248,415)'],[411,384,'9.80% (12,761,078)'],[450,1083,'27.62% (35,963,319)'],[489,959,'24.46% (31,849,332)'],[528,371,'9.46% (12,320,489)'],[567,843,'21.51% (27,999,352)']].forEach(([y, x, s]) => p.text(x, y, s, '#111', 'note', 'end'));
  p.rect(0, 586, W, 2, '#0000c8');
  candles.forEach((c, i) => {
    const x = X0 + STEP * i, color = c.up ? RED : BLUE;
    p.rect(x - 0.5, c.hi, 1, c.lo - c.hi, color);
    p.rect(x - 2.5, c.top, 5, c.bot - c.top, color);
  });
  const close = candles.map(c => c.up ? c.top : c.bot);
  p.series(average(close, 5, [508, 523, 533, 538]), C.m5);
  p.series(average(close, 10, [503, 512, 518, 523, 524, 524, 524, 524, 523]), C.m10);
  p.series(average(close, 20, [500, 502, 504, 506, 508, 509, 510, 510, 510, 510, 510, 510, 511, 508, 505, 503, 499, 497, 493]), C.m20);
  p.curve(line60, C.m60); p.curve(line120, C.m120); p.curve(line240, C.m240);
  const tri = (x, y, d, c) => p.add(`<path d="M${p.X(x) - 6} ${p.Y(y)}h12l-6 ${d}z" fill="${c}"/>`);
  tri(282, 424, 7, 'red'); tri(256.5, 456, -8, 'red');
  p.rect(282, 412, 1, 12, 'red'); p.rect(256, 456, 1, 9, 'red');
  p.text(253, 410, '배당락(80%)', '#111'); p.text(223, 475, '권리락(50%)', '#111');
  p.text(257, 128, '←─최고 117,500(2020/11/30, -82.77%)', '#b00d1e');
  p.text(658, 613, '최저 16,750(2022/09/26, +20.90%)─→', '#00008c');
  [[256,140,'117,500',1],[386,435,'50,000',1],[600,453,'45,750',1],[781,526,'29,250',1],[911,554,'22,800',1],[347,517,'36,100'],[541,538,'31,200'],[743,591,'19,150'],[794,588,'19,850'],[1087,591,'18,950']]
    .forEach(([x, y, s, up]) => p.text(x, y, s, up ? '#dc0014' : '#0000b4', 'lbl'));
  p.rect(1140, 549, 3, 37, RED); p.rect(1140, 574, 3, 26, BLUE);
  p.done();

  const ticks = [];
  for (let i = -4; i < 57; i++) ticks.push([136 + i * 8.74, i % 5 ? 3 : 5]);
  const a = axis('priceAxis', 99, 537, [120, 110, 100, 90, 80, 70, 60, 50, 40, 30, 20, 10].map((v, i) => [140 + i * 43.7, v + ',000', 53]), ticks);
  a.el.innerHTML += `<rect x="6" y="${a.Y(564)}" width="46" height="28" fill="#f00"/><path d="M0 ${a.Y(572)}l6 -5v10z" fill="#f00"/><text x="45" y="${a.Y(576)}" text-anchor="end" fill="#fff">20,250</text><text x="51" y="${a.Y(591)}" text-anchor="end" fill="#fff">%)</text><rect x="0.5" y="${Math.round(a.Y(580)) + 0.5}" width="41" height="14" fill="#e6ffe6" stroke="#000"/><text x="39" y="${a.Y(592)}" text-anchor="end">16,750</text>`;

  const v = pane('volume', 637, 65);
  v.years(); v.rect(0, 663, W, 1, GRID);
  volumes.forEach((b, i) => v.rect(X0 + STEP * i - 2.5, 701 - b.h, 5, b.h, b.up ? RED : BLUE));
  const h = volumes.map(b => 701 - b.h);
  v.series(average(h, 5, [691, 690, 688, 688]), C.m5);
  v.series(average(h, 20, [691, 690, 689, 689, 688, 687, 686]), C.m20);
  v.curve(vol60, C.m60); v.curve(vol120, C.m120);
  v.done();
  axis('volumeAxis', 637, 65, [[667, '2,500K', 48], [699, '0K', 48]], [[655,3],[663,5],[671,3],[678,3],[686,3],[693,3]]);

  const m = pane('macd', 703, 71);
  m.years(); [723, 739, 771].forEach(y => m.rect(0, y, W, 1, GRID));
  m.rect(0, 755, W, 1, '#f2b7d0');
  osc.forEach((n, i) => n && m.rect(X0 + STEP * i - 2.5, n > 0 ? 755 - n : 756, 5, Math.abs(n), n > 0 ? '#f49ac1' : '#99ccff'));
  m.curve(macdLine, '#e0701c'); m.curve(signalLine, '#3c64c8');
  m.done();
  axis('macdAxis', 703, 71, [[727, '10,000.00', 64], [743, '5,000.00', 64], [759, '0.00', 64], [772, '-5,000.0', 64]], [[723,5],[731,3],[739,5],[747,3],[755,5],[763,3],[771,5]]);

  const d = pane('dates', 0, 16);
  [['2020/03', 2], ['2021/01', 286], ['2022/01', 623], ['2023/01', 960]].forEach(([s, x]) => { d.rect(x, 0, 1, 5, '#bbb'); d.text(x + 1, 12, s, '#111'); });
  d.done();
}
draw();
window.addEventListener('resize', draw);
```
